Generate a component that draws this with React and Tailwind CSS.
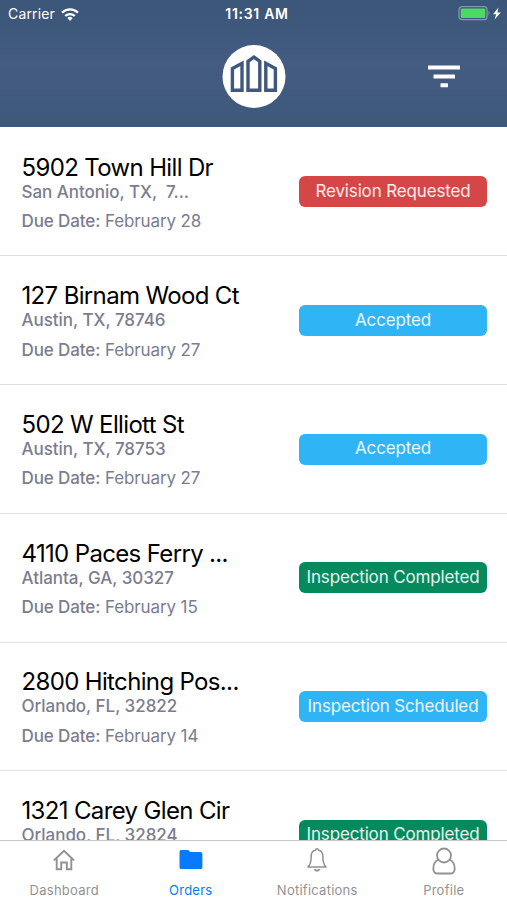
import clsx from "clsx";

const orders = [
  {
    address: "5902 Town Hill Dr",
    city: "San Antonio, TX,\u00a0 7...",
    due: "February 28",
    status: "Revision Requested",
  },
  {
    address: "127 Birnam Wood Ct",
    city: "Austin, TX, 78746",
    due: "February 27",
    status: "Accepted",
  },
  {
    address: "502 W Elliott St",
    city: "Austin, TX, 78753",
    due: "February 27",
    status: "Accepted",
  },
  {
    address: "4110 Paces Ferry ...",
    city: "Atlanta, GA, 30327",
    due: "February 15",
    status: "Inspection Completed",
  },
  {
    address: "2800 Hitching Pos...",
    city: "Orlando, FL, 32822",
    due: "February 14",
    status: "Inspection Scheduled",
  },
  {
    address: "1321 Carey Glen Cir",
    city: "Orlando, FL, 32824",
    status: "Inspection Completed",
  },
];

const statusColors = {
  "Revision Requested": "bg-[#d54747]",
  Accepted: "bg-[#2fb5f6]",
  "Inspection Completed": "bg-[#058a5e]",
  "Inspection Scheduled": "bg-[#2fb5f6]",
};

const tabs = [
  { label: "Dashboard", icon: HomeIcon },
  { label: "Orders", icon: FolderIcon },
  { label: "Notifications", icon: BellIcon },
  { label: "Profile", icon: PersonIcon },
];

function HomeIcon() {
  return (
    <svg width="24" height="26" viewBox="0 0 24 26" fill="none" stroke="currentColor" strokeWidth="1.9">
      <path d="M1.900 13.500 12 3.800l10.100 9.700" />
      <path d="M4.700 11.500v10.800h4.500v-6.800h5.600v6.800h4.500V11.500" />
    </svg>
  );
}

function FolderIcon() {
  return (
    <svg width="24" height="26" viewBox="0 0 24 26" fill="currentColor">
      <path d="M2.400 3h6.300c.5 0 .9.200 1.200.6l1.200 1.500h10.400c1.100 0 1.900.8 1.900 1.900v13.200c0 1.100-.8 1.900-1.900 1.900H2.400C1.300 22.100.5 21.300.5 20.200V4.900C.5 3.800 1.300 3 2.400 3Z" />
    </svg>
  );
}

function BellIcon() {
  return (
    <svg width="24" height="26" viewBox="0 0 24 26" fill="none" stroke="currentColor" strokeWidth="1.500">
      <path
        d="M10.700 3.100a1.300 1.300 0 0 1 2.600 0c3 .6 4.500 3 4.500 6.200 0 4.900.4 8.300 3.300 10.600H2.900c2.900-2.300 3.300-5.700 3.300-10.600 0-3.200 1.500-5.600 4.500-6.200Z"
        strokeLinejoin="round"
      />
      <path d="M9.600 22a2.500 2.500 0 0 0 4.800 0" strokeWidth="1.900" />
    </svg>
  );
}

function PersonIcon() {
  return (
    <svg width="26" height="30" viewBox="0 0 26 30" fill="none" stroke="currentColor" strokeWidth="1.800">
      <circle cx="13" cy="10.500" r="7" />
      <path d="M7.300 14.800c-3.200 1.600-5 4.700-5 8.600 0 3.200 1.400 5.100 4.600 5.100h12.200c3.200 0 4.600-1.900 4.600-5.100 0-3.900-1.800-7-5-8.600" />
    </svg>
  );
}

function StatusBar() {
  return (
    <div className="grid h-7 grid-cols-3 items-center pr-1.5 pl-2 text-sm leading-none">
      <div className="flex items-center gap-1.5">
        <span className="tracking-[0.15px]">Carrier</span>
        <svg width="18" height="13" viewBox="0 0 18 13" fill="none" stroke="currentColor" strokeWidth="2.300">
          <path d="M1 4.700a11.500 11.500 0 0 1 16 0" />
          <path d="M4.200 8a7 7 0 0 1 9.600 0" />
          <path d="M6.300 10.100a4 4 0 0 1 5.400 0L9 12.900Z" fill="currentColor" stroke="none" />
        </svg>
      </div>
      <span className="pl-[5px] text-center text-sm font-semibold tracking-[0.7px] whitespace-nowrap">
        11:31 AM
      </span>
      <svg className="justify-self-end" width="44" height="16" viewBox="0 0 44 16">
        <rect x="2" y="0.700" width="28" height="13" rx="3" fill="none" stroke="#8795ad" strokeWidth="1.300" />
        <rect x="3.700" y="2.400" width="24.600" height="9.600" rx="1.200" fill="#4cd964" />
        <path d="M31.500 5.200c1.300.4 1.300 3.600 0 4Z" fill="#8795ad" />
        <path d="M41.500 1.500 36 8.200h3.200L37.600 13.400l6.200-6.900h-3.400Z" fill="white" />
      </svg>
    </div>
  );
}

function Logo() {
  return (
    <svg width="64" height="64" viewBox="0 0 64 64">
      <circle cx="32" cy="32.500" r="31.500" fill="white" />
      <g fill="none" stroke="#40587f" strokeWidth="3.400">
        <path d="M10.400 46.300V24.500L20 19.300v27Z" />
        <path d="M26 46.300V17.300l5.900-4.200 5.900 4.200v29Z" />
        <path d="M43.800 46.300v-27l9.600 5.200v21.800Z" />
      </g>
    </svg>
  );
}

function OrderRow({ order }) {
  return (
    <li className="flex h-[128.7px] items-start justify-between border-b border-[#dfdfdf] pr-5 pl-[21.500px]">
      <div className="pt-[25.800px] whitespace-nowrap">
        <h2 className="text-2xl leading-7 tracking-[-0.65px] text-black">{order.address}</h2>
        <p className="text-[17px] leading-5 font-medium tracking-[-0.03px] text-[#7a7d90]">
          {order.city}
        </p>
        {order.due && (
          <p className="mt-[9.500px] text-[17px] leading-5 tracking-[-0.11px] text-[#7a7d90]">
            <span className="font-medium">Due Date:</span> {order.due}
          </p>
        )}
      </div>
      <div
        className={clsx(
          "mt-[48.500px] flex h-[31px] w-[188px] items-center justify-center rounded-md text-[17px] tracking-[-0.15px] whitespace-nowrap text-white/90",
          statusColors[order.status]
        )}
      >
        {order.status}
      </div>
    </li>
  );
}

export default function App() {
  return (
    <div className="flex h-[900px] w-[507px] flex-col overflow-hidden bg-white font-['Inter',sans-serif]">
      <header className="h-[127px] shrink-0 bg-linear-to-b from-[#3a5678] via-[#445b82] to-[#3d597a] text-white">
        <StatusBar />
        <div className="grid grid-cols-3 items-center pt-4">
          <div className="col-start-2 flex justify-center">
            <Logo />
          </div>
          <svg className="ml-[89px]" width="34" height="24" viewBox="0 0 34 24" fill="white">
            <rect x="1" y="1.500" width="32" height="4" rx=".5" />
            <rect x="6.500" y="10.500" width="21.500" height="4" rx=".5" />
            <rect x="13.500" y="19.200" width="7.500" height="4" rx=".5" />
          </svg>
        </div>
      </header>

      {/* Order list, clipped by the tab bar */}
      <ul className="min-h-0 flex-1 overflow-hidden pt-[0.800px]">
        {orders.map((order) => (
          <OrderRow key={order.address} order={order} />
        ))}
      </ul>

      <nav className="grid h-[60px] shrink-0 grid-cols-4 border-t border-[#c8c8c8] bg-white pl-px">
        {tabs.map(({ label, icon: Icon }) => (
          <a
            key={label}
            className={clsx(
              "flex flex-col items-center",
              label === "Orders" ? "text-[#087aff]" : "text-[#929292]"
            )}
          >
            <span className="flex h-[38px] items-center">
              <Icon />
            </span>
            <span className="mt-[3px] text-[13px] leading-4 tracking-[0.25px]">{label}</span>
          </a>
        ))}
      </nav>
    </div>
  );
}
